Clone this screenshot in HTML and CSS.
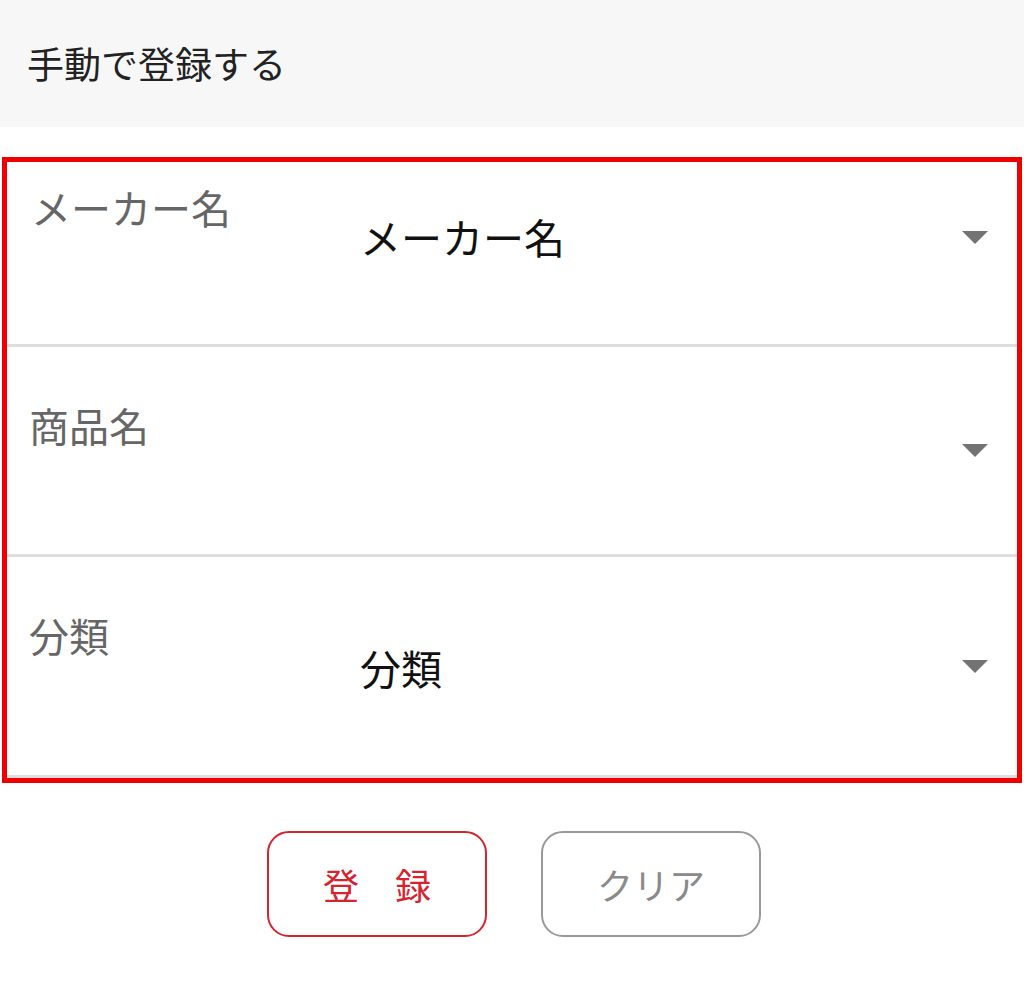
FILE: index.html
```html
<!DOCTYPE html>
<html lang="ja">
<head>
<meta charset="utf-8">
<title>手動で登録する</title>
<link rel="stylesheet" href="styles.css">
</head>
<body>
<header class="header">手動で登録する</header>
<section class="form-box">
  <div class="row row-maker">
    <div class="label">メーカー名</div>
    <div class="value">メーカー名</div>
    <div class="arrow"></div>
  </div>
  <div class="row row-product">
    <div class="label">商品名</div>
    <div class="value"></div>
    <div class="arrow"></div>
  </div>
  <div class="row row-category">
    <div class="label">分類</div>
    <div class="value">分類</div>
    <div class="arrow"></div>
  </div>
</section>
<div class="actions">
  <button class="btn btn-primary">登　録</button>
  <button class="btn btn-secondary">クリア</button>
</div>
</body>
</html>
```
FILE: styles.css
```css
html, body {
  margin: 0;
  padding: 0;
  background: #ffffff;
  font-family: "Noto Sans CJK JP", "Noto Sans", sans-serif;
}

.header {
  height: 127px;
  background: #f7f7f7;
  display: flex;
  align-items: center;
  padding-left: 27px;
  font-size: 37px;
  line-height: 37px;
  color: #222222;
}

.form-box {
  margin: 30px 2px 0 2px;
  border: 5px solid #ee0000;
}

.row {
  display: flex;
  align-items: flex-start;
  padding-left: 22px;
  padding-right: 29px;
  box-sizing: border-box;
  border-bottom: 3px solid #dedede;
}

.label {
  width: 331px;
  flex: none;
  font-size: 40px;
  line-height: 40px;
  color: #666666;
}

.value {
  flex: 1;
  font-size: 41px;
  line-height: 41px;
  color: #111111;
}

.arrow {
  flex: none;
  width: 0;
  height: 0;
  border-left: 13px solid transparent;
  border-right: 13px solid transparent;
  border-top: 13px solid #737373;
}

.row-maker {
  height: 185px;
  padding-top: 25px;
}
.row-maker .label { margin-left: 2px; width: 329px; }
.row-maker .value { margin-top: 29px; }
.row-maker .arrow { margin-top: 44px; }

.row-product {
  height: 210px;
  padding-top: 58px;
}
.row-product .arrow { margin-top: 39px; }

.row-category {
  height: 221px;
  padding-top: 58px;
}
.row-category .value { margin-top: 32px; }
.row-category .arrow { margin-top: 45px; }

.actions {
  display: flex;
  justify-content: center;
  gap: 54px;
  margin-top: 48px;
  padding-left: 4px;
}

.btn {
  width: 220px;
  height: 106px;
  box-sizing: border-box;
  border-radius: 22px;
  background: #ffffff;
  font-family: "Noto Sans CJK JP", "Noto Sans", sans-serif;
  font-size: 36px;
  line-height: 36px;
  padding: 0;
}

.btn-primary {
  border: 2px solid #d6232e;
  color: #d6232e;
}

.btn-secondary {
  border: 2px solid #999999;
  color: #8a8a8a;
}
```
